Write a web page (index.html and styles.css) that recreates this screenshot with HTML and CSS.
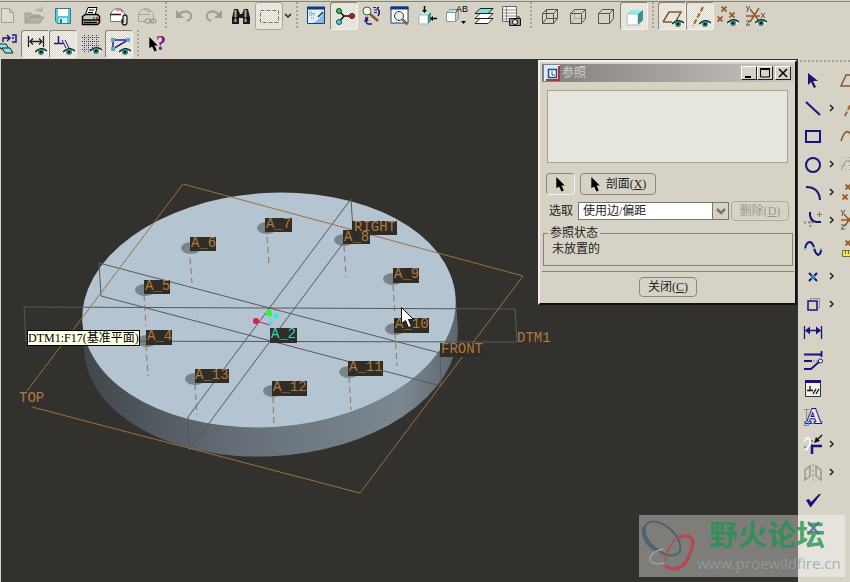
FILE: index.html
```html
<!DOCTYPE html>
<html lang="zh-CN">
<head>
    <meta charset="UTF-8">
    <meta name="viewport" content="width=device-width, initial-scale=1.0">
    <title>参照</title>
    <link rel="stylesheet" href="styles.css">
</head>
<body>

    <!-- Shared symbols -->
    <svg class="symbols" aria-hidden="true">
        <symbol id="eye" viewBox="0 0 12 8">
            <path d="M0 4Q6-3 12 4Q6 10 0 4z" fill="#eef4f0"/>
            <path d="M0 4Q6-2 12 3" fill="none" stroke="#10282a" stroke-width="1.500"/>
            <circle cx="6" cy="4" r="3" fill="#3c827c"/>
            <circle cx="6" cy="4" r="1.300" fill="#062022"/>
        </symbol>
        <symbol id="chevron" viewBox="0 0 6 8">
            <path d="M1 1l3 3-3 3" fill="none" stroke="#222" stroke-width="1.500"/>
        </symbol>
        <symbol id="pointer" viewBox="0 0 12 16">
            <path d="M1 0v12l3-2 2.500 5.500 2.500-1L6.500 9H10z" fill="#000"/>
        </symbol>
        <symbol id="cross" viewBox="0 0 6 6">
            <path d="M0.500 0.500l5 5M5.500 0.500l-5 5" stroke="#9a5722" stroke-width="1.800"/>
        </symbol>
    </svg>

    <!-- Top toolbars -->
    <header class="toolbars">
        <div class="toolbar">
            <button class="tool" aria-label="新建"><svg viewBox="0 0 24 24"><path d="M6.500 4.500h8l4 4v10h-12zM14.500 4.500v4h4" fill="#dedbd0" stroke="#a4a193"/></svg></button>
            <button class="tool" aria-label="打开"><svg viewBox="0 0 24 24"><path d="M2 19V9h6l2 2h7v2H8zM2 19L7 13h14l-4 6z" fill="#b4b1a4" stroke="#a09d90"/><path d="M12 7q4-4 7 0M19 3v4h-4" fill="none" stroke="#a09d90"/></svg></button>
            <button class="tool" aria-label="保存"><svg viewBox="0 0 24 24"><path d="M4.500 4.500h15v15h-13l-2-2z" fill="#58cbd2" stroke="#2b7f8b"/><path d="M7 5h10v7H7z" fill="#fff"/><path d="M8 14h8v5H8z" fill="#d8eef0"/><path d="M9 15h2v4H9z" fill="#2b7f8b"/></svg></button>
            <button class="tool" aria-label="打印"><svg viewBox="0 0 24 24"><path d="M9 3.500h9l-2 8H6z" fill="#fff" stroke="#000"/><path d="M10 6h5M9 8.500h5" stroke="#000"/><path d="M3.500 12.500l3-2h12l2 2v6l-2 2h-15z" fill="#c9c7bf" stroke="#000" stroke-width="1.500"/><path d="M4 16h16M5 18.500h13" stroke="#000" stroke-width="1.500"/><path d="M14 14h2" stroke="#2a2" stroke-width="2"/><path d="M17 14h2" stroke="#d22" stroke-width="2"/></svg></button>
            <button class="tool" aria-label="发送附件"><svg viewBox="0 0 24 24"><path d="M3.500 17.500v-7q2-6 7-6 6 0 8 7v6z" fill="#fff" stroke="#777"/><path d="M3 10.500h11" stroke="#222" stroke-width="1.500"/><path d="M9 6h6v3" fill="none" stroke="#c33"/><path d="M16 19v-6q0-2 2-2t2 2v5q0 3-2.500 3T15 18v-3" fill="#ddd" stroke="#222" stroke-width="1.300"/></svg></button>
            <button class="tool" aria-label="发送链接"><svg viewBox="0 0 24 24"><path d="M3.500 17.500v-7q2-6 7-6 6 0 8 7v6zM3 10.500h12M9 6h5v3" fill="none" stroke="#a5a294"/><rect x="10" y="15" width="6" height="4" rx="2" fill="#d6d3c6" stroke="#8f8c80"/><rect x="15" y="15" width="6" height="4" rx="2" fill="none" stroke="#8f8c80"/></svg></button>
            <span class="separator"></span>
            <button class="tool" aria-label="撤销"><svg viewBox="0 0 24 24"><path d="M5 11q7-6 12-2 4 5-3 8" fill="none" stroke="#a09d90" stroke-width="2"/><path d="M3 6v8h8z" fill="#a09d90"/></svg></button>
            <button class="tool" aria-label="重做"><svg viewBox="0 0 24 24"><path d="M19 11q-7-6-12-2-4 5 3 8" fill="none" stroke="#a09d90" stroke-width="2"/><path d="M21 6v8h-8z" fill="#a09d90"/></svg></button>
            <button class="tool" aria-label="查找"><svg viewBox="0 0 24 24"><path d="M5 5h4l2 5h2l2-5h4l2 9v6h-7v-6h-4v6H3v-6z" fill="#1a1a1a"/><path d="M6.500 6v12M16.500 6v12" stroke="#aaa" stroke-width="2"/><path d="M3 14h7M14 14h7" stroke="#000"/></svg></button>
            <button class="tool pressed round" aria-label="选取框"><svg viewBox="0 0 24 24"><rect x="3.500" y="6.500" width="18" height="12" fill="none" stroke="#777468" stroke-dasharray="4 2"/></svg></button>
            <button class="drop" aria-label="选取选项"><svg viewBox="0 0 8 6"><path d="M1 1l3 3 3-3" fill="none" stroke="#222" stroke-width="1.500"/></svg></button>
            <span class="separator"></span>
            <button class="tool" aria-label="重画"><svg viewBox="0 0 24 24"><path d="M3.500 3.500h17v16h-17z" fill="#e2eef8" stroke="#123f80"/><path d="M3 4h18" stroke="#0d3a86" stroke-width="3"/><path d="M9 19q8-4 11-12v12z" fill="#8ab7e8"/><path d="M14 13l5-5" stroke="#16325c" stroke-width="1.500"/><path d="M5 8h3M5 11h6M6 9.500h5M7 14h3" stroke="#397" stroke-dasharray="1 1"/></svg></button>
            <button class="tool pressed" aria-label="旋转中心"><svg viewBox="0 0 24 24"><path d="M7 7l5 5-5 6M12 12h8" fill="none" stroke="#111" stroke-width="1.500"/><circle cx="7" cy="7" r="2.500" fill="#38c450" stroke="#0b4b18"/><circle cx="7" cy="18" r="2.500" fill="#45d7dd" stroke="#0c4c57"/><circle cx="20" cy="12" r="2.500" fill="#b3262b" stroke="#510b0e"/></svg></button>
            <button class="tool" aria-label="定向模式"><svg viewBox="0 0 24 24"><circle cx="7" cy="7" r="4" fill="#f2f2ee" stroke="#555"/><path d="M10 10l8 7" stroke="#7d5536" stroke-width="2.500"/><path d="M13 3.500h6M14 6h5M14 8.500h3" stroke="#1a1a7c" stroke-dasharray="3 1"/><path d="M17 4q4 4 1 8M8 13q-4 5 0 7l4 0M8 17l-2-3-1 4" fill="none" stroke="#1a1a7c" stroke-width="1.500"/></svg></button>
            <button class="tool" aria-label="重新调整"><svg viewBox="0 0 24 24"><path d="M3 3h17v16H3z" fill="#fff" stroke="#123f80"/><path d="M2.500 4h18" stroke="#0d3a86" stroke-width="3"/><circle cx="11" cy="12" r="4.500" fill="#e8eef0" stroke="#333"/><path d="M14.500 15.500l5 5" stroke="#8d6239" stroke-width="2.500"/></svg></button>
            <button class="tool" aria-label="定向"><svg viewBox="0 0 24 24"><path d="M3 11l3-3h9l-3 3z" fill="#a9ecec"/><path d="M3 11h9v9H3z" fill="#fff" stroke="#9bb"/><path d="M12 11l3-3v9l-3 3z" fill="#3b9795"/><path d="M8.500 2v5M21 14.500h-5" stroke="#000" stroke-width="1.500"/><path d="M6 6h5l-2.500 3zM17 12v5l-3-2.500z"/></svg></button>
            <button class="tool" aria-label="已命名视图"><svg viewBox="0 0 24 24"><path d="M2.500 8.500l3-3h9l-3 3z" fill="#9fe9e9" stroke="#899"/><path d="M2.500 8.500h9v9h-9z" fill="#fff" stroke="#899"/><path d="M11.500 8.500l3-3v9l-3 3z" fill="#b7c7c4" stroke="#899"/><text class="icon-text" x="12" y="8">AB</text><path d="M17 17h5l-2.500 3z"/></svg></button>
            <button class="tool" aria-label="图层"><svg viewBox="0 0 24 24"><path d="M3 19.500l5-5h13l-5 5zM3 14.500l5-5h13l-5 5z" fill="#fff" stroke="#222"/><path d="M3 9.500l5-5h13l-5 5z" fill="#80dfdd" stroke="#222"/></svg></button>
            <button class="tool" aria-label="视图管理器"><svg viewBox="0 0 24 24"><path d="M2.500 2.500h14v15h-14z" fill="#fff" stroke="#666"/><path d="M3 6h13M3 9h13M3 12h13M3 15h13M6.500 3v14" stroke="#888"/><path d="M9.500 14.500h11v7h-11zM17 13h3" fill="#98958a" stroke="#111"/><circle cx="15" cy="18" r="2.500" fill="#eee" stroke="#111"/></svg></button>
            <span class="separator"></span>
            <button class="tool" aria-label="线框"><svg viewBox="0 0 24 24"><path d="M4.500 9.500l4-4h11v9l-4 5h-11zM4.500 9.500h11v10M15.500 9.500l4-4M8.500 5.500v9h11M8.500 14.500l-4 5" fill="none" stroke="#55534c"/></svg></button>
            <button class="tool" aria-label="隐藏线"><svg viewBox="0 0 24 24"><path d="M8.500 5.500v9h11M8.500 14.500l-4 5" fill="none" stroke="#aaa89c"/><path d="M4.500 9.500l4-4h11v9l-4 5h-11zM4.500 9.500h11v10M15.500 9.500l4-4" fill="none" stroke="#55534c"/></svg></button>
            <button class="tool" aria-label="消隐"><svg viewBox="0 0 24 24"><path d="M4.500 9.500l4-4h11v9l-4 5h-11zM4.500 9.500h11v10M15.500 9.500l4-4" fill="none" stroke="#55534c"/></svg></button>
            <button class="tool pressed" aria-label="着色"><svg viewBox="0 0 24 24"><path d="M5 10l4-4h12l-5 4z" fill="#8eeeee"/><path d="M5 10h11v11H5z" fill="#fff" stroke="#abc"/><path d="M16 10l5-4v10l-5 5z" fill="#3b9090"/></svg></button>
            <span class="separator"></span>
            <button class="tool pressed" aria-label="基准平面开关"><svg viewBox="0 0 24 24"><path d="M3 18l6-10h12l-5 9M3 18h9" fill="none" stroke="#8c5426" stroke-width="1.500"/><use href="#eye" x="12" y="16" width="12" height="8"/></svg></button>
            <button class="tool pressed" aria-label="基准轴开关"><svg viewBox="0 0 24 24"><path d="M15 3L5 22" stroke="#a5622d" stroke-width="2" stroke-dasharray="5 2"/><use href="#eye" x="11" y="16" width="12" height="8"/></svg></button>
            <button class="tool" aria-label="基准点开关"><svg viewBox="0 0 24 24"><use href="#cross" x="5" y="2" width="6" height="6"/><use href="#cross" x="13" y="8" width="6" height="6"/><use href="#cross" x="1" y="12" width="6" height="6"/><use href="#eye" x="11" y="15" width="12" height="8"/></svg></button>
            <button class="tool" aria-label="坐标系开关"><svg viewBox="0 0 24 24"><path d="M2 12h14M6 5l10 13M15 4L6 18" stroke="#9a5722" stroke-width="1.500"/><path d="M2 2l2 3 2-3M4 5l-1 3M2 17h4l-4 4h4M17 9l4 5M21 9l-4 5" fill="none" stroke="#55534c"/><use href="#eye" x="11" y="15" width="12" height="8"/></svg></button>
        </div>

        <div class="toolbar">
            <button class="tool" aria-label="再生"><svg viewBox="0 0 24 24"><path d="M3 12h8l3 5H6z" fill="#8fe4e0" stroke="#123"/><path d="M7 16h8l3 5h-8z" fill="#8fe4e0" stroke="#123"/><path d="M8 10V6h6M12 3l3 3-3 3M17 3h4v7h-4M17 6h2" fill="none" stroke="#1a1a7c" stroke-width="1.500"/></svg></button>
            <button class="tool pressed" aria-label="显示尺寸"><svg viewBox="0 0 24 24"><path d="M5.500 4v11M20.500 4v11M7 9.500h12M10 6.500l-3 3 3 3M16 6.500l3 3-3 3" fill="none" stroke="#222" stroke-width="1.300"/><use href="#eye" x="12" y="16" width="12" height="8"/></svg></button>
            <button class="tool pressed" aria-label="显示约束"><svg viewBox="0 0 24 24"><path d="M3 11.500h9M7.500 4v7" stroke="#15157a" stroke-width="1.500"/><path d="M11 8l4 8M14 8l4 8" stroke="#15157a"/><use href="#eye" x="12" y="16" width="12" height="8"/></svg></button>
            <button class="tool" aria-label="显示栅格"><svg viewBox="0 0 24 24"><path d="M5.500 3v18M9.500 3v18M13.500 3v18M17.500 3v18M3 5.500h17M3 9.500h17M3 13.500h17M3 17.500h17" stroke="#34347c" stroke-dasharray="1 1"/><use href="#eye" x="11" y="15" width="12" height="8"/></svg></button>
            <button class="tool pressed" aria-label="显示顶点"><svg viewBox="0 0 24 24"><path d="M6 8h15L6 17z" fill="none" stroke="#24248a" stroke-width="1.500"/><path d="M4 6h4v4H4zM19 6h4v4h-4zM4 15h4v4H4z" fill="#58a7cf"/><use href="#eye" x="12" y="16" width="12" height="8"/></svg></button>
            <span class="separator"></span>
            <button class="tool" aria-label="帮助"><svg viewBox="0 0 24 24"><use href="#pointer" x="3" y="5" width="12" height="15"/><text class="help-mark" x="11" y="18">?</text></svg></button>
        </div>
    </header>

    <main class="workspace">
        <!-- 3D view -->
        <section class="viewport">
            <svg class="scene" role="img" aria-label="模型">
                <defs>
                    <linearGradient id="side" gradientUnits="userSpaceOnUse" x1="82" y1="0" x2="458" y2="0">
                        <stop offset="0" stop-color="#41464c"/>
                        <stop offset="0.450" stop-color="#68717a"/>
                        <stop offset="0.850" stop-color="#7b8791"/>
                        <stop offset="1" stop-color="#5c666e"/>
                    </linearGradient>
                </defs>
                <g transform="translate(-1 -59)">
                    <path d="M82 318L84 347L458 331L456 302z" fill="url(#side)"/>
                    <path d="M84 347A187 117 -4 0 0 458 331z" fill="url(#side)"/>
                    <ellipse cx="269" cy="310" rx="187" ry="117" transform="rotate(-4 269 310)" fill="#b4c4d0"/>

                    <!-- holes -->
                    <g fill="#78838c">
                        <ellipse cx="267" cy="228" rx="10" ry="6"/>
                        <ellipse cx="191" cy="248" rx="10" ry="6"/>
                        <ellipse cx="145" cy="290" rx="10" ry="6"/>
                        <ellipse cx="147" cy="341" rx="10" ry="6"/>
                        <ellipse cx="195" cy="379" rx="10" ry="6"/>
                        <ellipse cx="273" cy="391" rx="10" ry="6"/>
                        <ellipse cx="349" cy="372" rx="10" ry="6"/>
                        <ellipse cx="395" cy="329" rx="10" ry="6"/>
                        <ellipse cx="393" cy="279" rx="10" ry="6"/>
                        <ellipse cx="344" cy="240" rx="10" ry="6"/>
                    </g>

                    <!-- hole axes -->
                    <path d="M267 237l2 27M190 258l2 25M144 295l2 31M146 345l2 31M195 384l2 31M273 397l1 30M349 377l2 33M395 333l2 33M393 285l2 29M344 246l2 31" fill="none" stroke="#8d7460" stroke-dasharray="6 4"/>

                    <!-- datum planes -->
                    <g fill="none" stroke="#555a5e">
                        <path d="M26 341L24 307L515 309L517 342L26 341"/>
                        <path d="M99 263L440 353L441 386L101 296z"/>
                        <path d="M188 417L351 199L353 230L189 450z"/>
                    </g>
                    <path d="M27 391L183 184L523 276L360 493L32 407" fill="none" stroke="#9c7142"/>

                    <!-- spin center -->
                    <path d="M256 321l14 4" stroke="#d0205a"/>
                    <path d="M276 316l-6 9v-12" fill="none" stroke="#28e8d8"/>
                    <circle cx="256" cy="321" r="3" fill="#d81c50"/>
                    <circle cx="276" cy="316" r="2.500" fill="#28e8e8"/>
                    <rect x="266" y="310" width="6" height="6" fill="#3ef03e"/>

                    <g class="label-box">
                        <rect x="352" y="221" width="45" height="14"/>
                        <rect x="265" y="218" width="27" height="14"/>
                        <rect x="190" y="237" width="26" height="14"/>
                        <rect x="144" y="280" width="26" height="14"/>
                        <rect x="146" y="330" width="26" height="15"/>
                        <rect x="195" y="369" width="34" height="14"/>
                        <rect x="272" y="381" width="35" height="15"/>
                        <rect x="348" y="361" width="35" height="15"/>
                        <rect x="394" y="318" width="35" height="15"/>
                        <rect x="393" y="268" width="26" height="15"/>
                        <rect x="343" y="230" width="27" height="14"/>
                        <rect x="440" y="343" width="42" height="14"/>
                        <rect x="270" y="328" width="27" height="15"/>
                    </g>
                    <g class="label">
                        <text x="354" y="231">RIGHT</text>
                        <text x="266" y="228">A_7</text>
                        <text x="191" y="247">A_6</text>
                        <text x="145" y="290">A_5</text>
                        <text x="147" y="340">A_4</text>
                        <text x="195" y="379">A_13</text>
                        <text x="273" y="391">A_12</text>
                        <text x="349" y="371">A_11</text>
                        <text x="395" y="328">A_10</text>
                        <text x="394" y="278">A_9</text>
                        <text x="344" y="241">A_8</text>
                        <text x="441" y="353">FRONT</text>
                        <text x="517" y="342">DTM1</text>
                        <text x="19" y="402">TOP</text>
                        <text class="active" x="271" y="338">A_2</text>
                    </g>

                    <path d="M401.500 307.500v16l4-3 3 7 3-1-3-7h5z" fill="#fff" stroke="#111"/>
                </g>
            </svg>

            <div class="tooltip" role="tooltip">DTM1:F17(基准平面)</div>

            <!-- References dialog -->
            <form class="dialog" onsubmit="return false">
                <div class="titlebar">
                    <svg class="title-icon" viewBox="0 0 16 16"><rect width="16" height="16" fill="#d9eef8"/><path d="M15 1v14H2" fill="none" stroke="#b83232" stroke-width="2"/><path d="M4.500 4.500h8v8h-8z" fill="#fff" stroke="#1c4f87" stroke-width="1.500"/><path d="M8 6v4h3" fill="none" stroke="#1c4f87"/></svg>
                    <h1>参照</h1>
                    <div class="window-buttons">
                        <button type="button" aria-label="最小化"><svg viewBox="0 0 12 10"><path d="M2 9h6" stroke="#000" stroke-width="2"/></svg></button>
                        <button type="button" aria-label="最大化"><svg viewBox="0 0 12 10"><path d="M1.500 1h9v8h-9z" fill="none" stroke="#000"/><path d="M1 1h10" stroke="#000" stroke-width="2"/></svg></button>
                        <button class="close" type="button" aria-label="关闭窗口"><svg viewBox="0 0 12 10"><path d="M2 1l8 8M10 1L2 9" stroke="#000" stroke-width="1.500"/></svg></button>
                    </div>
                </div>

                <div class="reference-list"></div>

                <div class="pick-row">
                    <button class="btn pick" type="button" aria-label="选取"><svg viewBox="0 0 12 16"><use href="#pointer" width="12" height="16"/></svg></button>
                    <button class="btn section-btn" type="button"><svg viewBox="0 0 12 16"><use href="#pointer" width="12" height="16"/></svg><span>剖面(<u>X</u>)</span></button>
                </div>

                <div class="select-row">
                    <label for="pickMode">选取</label>
                    <div class="combo">
                        <select id="pickMode">
                            <option>使用边/偏距</option>
                        </select>
                        <span class="combo-arrow"><svg viewBox="0 0 10 8"><path d="M1 2l4 4 4-4" fill="none" stroke="#77756a" stroke-width="2.500"/></svg></span>
                    </div>
                    <button class="btn delete-btn" type="button" disabled>删除(<u>D</u>)</button>
                </div>

                <fieldset class="status">
                    <legend>参照状态</legend>
                    <p>未放置的</p>
                </fieldset>

                <div class="dialog-footer">
                    <button class="btn close-btn" type="button">关闭(<u>C</u>)</button>
                </div>
            </form>
        </section>

        <!-- Sketcher tools: tool, flyout arrow, datum tool -->
        <aside class="side-tools">
            <div class="grip"></div>
            <div class="side-grid">
                <button class="tool" aria-label="选取项目"><svg viewBox="0 0 24 24"><path d="M7 5v12l3-3 3 6 2-1-3-6h5z" fill="#14147c"/></svg></button>
                <span></span>
                <button class="tool" aria-label="基准平面"><svg viewBox="0 0 24 24"><path d="M2 18L7 7h12l-5 11z" fill="none" stroke="#8c5426" stroke-width="1.500"/></svg></button>

                <button class="tool" aria-label="直线"><svg viewBox="0 0 24 24"><path d="M5 6l14 13" stroke="#14147c" stroke-width="2"/></svg></button>
                <button class="flyout" aria-label="直线选项"><svg><use href="#chevron"/></svg></button>
                <button class="tool" aria-label="基准轴"><svg viewBox="0 0 24 24"><path d="M14 3L5 22" stroke="#a5622d" stroke-width="2" stroke-dasharray="5 2"/></svg></button>

                <button class="tool" aria-label="矩形"><svg viewBox="0 0 24 24"><path d="M5 7h14v11H5z" fill="none" stroke="#14147c" stroke-width="2"/></svg></button>
                <span></span>
                <button class="tool" aria-label="曲线"><svg viewBox="0 0 24 24"><path d="M2 17q5-15 10-6t10-2" fill="none" stroke="#8c5426" stroke-width="1.500"/></svg></button>

                <button class="tool" aria-label="圆"><svg viewBox="0 0 24 24"><circle cx="12" cy="13" r="7" fill="none" stroke="#14147c" stroke-width="2"/></svg></button>
                <button class="flyout" aria-label="圆选项"><svg><use href="#chevron"/></svg></button>
                <button class="tool" aria-label="草绘曲线"><svg viewBox="0 0 24 24"><path d="M2 5.500h20M2 9.500h20M2 13.500h20M2 17.500h20" stroke="#a4a193" stroke-dasharray="1 3"/><path d="M3 17q4-13 9-6t10-2" fill="none" stroke="#a4a193" stroke-width="1.500"/></svg></button>

                <button class="tool" aria-label="圆弧"><svg viewBox="0 0 24 24"><path d="M5 7q13 0 14 13" fill="none" stroke="#14147c" stroke-width="2"/></svg></button>
                <button class="flyout" aria-label="圆弧选项"><svg><use href="#chevron"/></svg></button>
                <button class="tool" aria-label="基准点"><svg viewBox="0 0 24 24"><use href="#cross" x="6" y="4" width="6" height="6"/><use href="#cross" x="3" y="14" width="6" height="6"/><use href="#cross" x="14" y="9" width="6" height="6"/></svg></button>

                <button class="tool" aria-label="圆角"><svg viewBox="0 0 24 24"><path d="M3 14.500h9M9.500 13v8" stroke="#888" stroke-width="2" stroke-dasharray="2 2"/><path d="M16 6.500h5M18.500 4v5" stroke="#777"/><path d="M9 4v3q1 7 7 7h4" fill="none" stroke="#14147c" stroke-width="2"/></svg></button>
                <button class="flyout" aria-label="圆角选项"><svg><use href="#chevron"/></svg></button>
                <button class="tool" aria-label="坐标系"><svg viewBox="0 0 24 24"><path d="M2 12h16M5 6l10 12M15 4L6 18" stroke="#9a5722" stroke-width="1.500"/><path d="M2 2l2 3 2-3M4 5l-1 3M2 17h4l-4 4h4" fill="none" stroke="#55534c"/></svg></button>

                <button class="tool" aria-label="样条"><svg viewBox="0 0 24 24"><path d="M4 13q1-7 5-7 3 1 4 6t4 7q3-1 3-6" fill="none" stroke="#14147c" stroke-width="2"/><path d="M3 12h2v2H3zM12 11h2v2h-2zM19 12h2v2h-2z" fill="#51c4dc"/></svg></button>
                <span></span>
                <button class="tool" aria-label="偏移点"><svg viewBox="0 0 24 24"><use href="#cross" x="6" y="4" width="6" height="6"/><path d="M3.500 14.500h16v6h-16z" fill="#f0e45c" stroke="#77703a"/><path d="M6.500 15v3M9.500 15v3M12.500 15v3" stroke="#77703a"/></svg></button>

                <button class="tool" aria-label="点"><svg viewBox="0 0 24 24"><path d="M8 9l8 8M16 9l-8 8" stroke="#14147c" stroke-width="2"/><path d="M10 11h4v4h-4z" fill="#2a86bb"/></svg></button>
                <button class="flyout" aria-label="点选项"><svg><use href="#chevron"/></svg></button>
                <span></span>

                <button class="tool" aria-label="使用边"><svg viewBox="0 0 24 24"><path d="M9.500 6.500h9v9h-9z" fill="none" stroke="#8f8c80"/><path d="M7 9h9v9H7z" fill="#d6d3c6" stroke="#14147c" stroke-width="1.500"/></svg></button>
                <button class="flyout" aria-label="使用边选项"><svg><use href="#chevron"/></svg></button>
                <span></span>

                <button class="tool" aria-label="尺寸"><svg viewBox="0 0 24 24"><path d="M3.500 6v13M20.500 6v13M5 10.500h14" stroke="#14147c" stroke-width="1.300"/><path d="M4 10.500l5-4v8zM20 10.500l-5-4v8z" fill="#14147c"/></svg></button>
                <span></span>
                <span></span>

                <button class="tool" aria-label="修改"><svg viewBox="0 0 24 24"><path d="M3 6.500h18M20.500 3v6M3 13h8M3 21h7l9-8" fill="none" stroke="#14147c" stroke-width="1.800"/><path d="M12 13h6" stroke="#58a" stroke-dasharray="2 1"/><circle cx="19.500" cy="13" r="2" fill="#fff" stroke="#14147c"/></svg></button>
                <span></span>
                <span></span>

                <button class="tool" aria-label="约束"><svg viewBox="0 0 24 24"><path d="M4.500 4.500h15v16h-15z" fill="#f2f1ea" stroke="#333"/><path d="M4 5.500h16" stroke="#14147c" stroke-width="3"/><path d="M6 14.500h6M9 10v4M12 18l3-5M15 18l3-5" stroke="#111" stroke-width="1.300"/></svg></button>
                <span></span>
                <span></span>

                <button class="tool" aria-label="文本"><svg viewBox="0 0 24 24"><path d="M5.500 5v13M3 5.500h5M5 19.500h15" stroke="#8f8c80"/><text class="text-tool" x="5" y="19">A</text><path d="M3.500 17.500h4v4h-4z" fill="none" stroke="#4694c4"/></svg></button>
                <span></span>
                <span></span>

                <button class="tool" aria-label="修剪"><svg viewBox="0 0 24 24"><path d="M3 15h8M11 8v6" stroke="#888" stroke-width="2" stroke-dasharray="2 2"/><path d="M3 9q5-6 6 0t-5 9" fill="none" stroke="#fff" stroke-width="1.500"/><path d="M11 22v-8h10" fill="none" stroke="#14147c" stroke-width="2.500"/><path d="M21 3l-5 5" stroke="#111" stroke-width="1.500"/><path d="M13 11l2-6 4 4z" fill="#111"/></svg></button>
                <button class="flyout" aria-label="修剪选项"><svg><use href="#chevron"/></svg></button>
                <span></span>

                <button class="tool" aria-label="镜像"><svg viewBox="0 0 24 24"><path d="M4 10l5-4v10l-5 4zM20 10l-5-4v10l5 4z" fill="none" stroke="#98958a" stroke-width="1.500"/><path d="M12 4v17" stroke="#98958a" stroke-dasharray="3 2"/></svg></button>
                <button class="flyout" aria-label="镜像选项"><svg><use href="#chevron"/></svg></button>
                <span></span>

                <button class="tool" aria-label="完成"><svg viewBox="0 0 24 24"><path d="M5 12l3-1 2 3 8-8h2L10 19H9z" fill="#14147c"/></svg></button>
                <span></span>
                <span></span>

                <button class="tool" aria-label="退出"><svg viewBox="0 0 24 24"><path d="M7 6l11 12M18 6L7 18" stroke="#14147c" stroke-width="2"/></svg></button>
                <span></span>
                <span></span>
            </div>
        </aside>
    </main>

    <!-- Forum watermark -->
    <div class="watermark">
        <svg class="watermark-logo" viewBox="0 0 60 58">
            <ellipse cx="23" cy="21" rx="23" ry="13" transform="rotate(42 23 21)" fill="none" stroke="#4d6272" stroke-width="2"/>
            <path d="M3 9Q1 24 17 34" fill="none" stroke="#4d6272" stroke-width="4"/>
            <path d="M39 20Q58 14 55 29Q48 57 31 53Q27 52 27 49" fill="none" stroke="#b84850" stroke-width="3.500"/>
            <path d="M26 47Q25 36 36 22" fill="none" stroke="#b84850" stroke-width="1.500"/>
            <path d="M25 32Q8 35 10 45Q15 50 25 47" fill="none" stroke="#9a9c99" stroke-width="2"/>
        </svg>
        <div class="watermark-text">
            <strong>野火论坛</strong>
            <span>www.proewildfire.cn</span>
        </div>
    </div>

</body>
</html>
```
FILE: styles.css
```css
* {
    box-sizing: border-box;
}

body {
    margin: 0;
    height: 100vh;
    display: flex;
    flex-direction: column;
    position: relative;
    overflow: hidden;
    background-color: #d6d3c6;
    color: #222;
    font-family: "Liberation Serif", "Noto Sans CJK SC", serif;
    font-size: 12px;
    line-height: 16px;
}

button {
    padding: 0;
    border: 0;
    background: none;
    color: inherit;
    font: inherit;
}

svg {
    display: block;
}

.symbols {
    position: absolute;
    width: 0;
    height: 0;
}

/* Top toolbars */
.toolbars {
    margin-top: 1px;
    border-top: 1px solid #85837a;
    padding-bottom: 1px;
    overflow: hidden;
}

.toolbar {
    display: flex;
    height: 28px;
    margin-left: -7px;
}

.tool {
    flex: none;
    display: flex;
    align-items: center;
    justify-content: center;
    width: 28px;
    height: 28px;
    border: 1px solid transparent;
}

.tool svg {
    flex: none;
    width: 24px;
    height: 24px;
}

.pressed {
    background: repeating-conic-gradient(#f6f3ee 0 25%, #dad7cb 0 50%) 0 0 / 2px 2px;
    border-color: #85837a #f4f2ea #f4f2ea #85837a;
    border-radius: 3px;
}

.round {
    border-color: #aaa798;
}

.drop {
    display: flex;
    align-items: center;
    justify-content: center;
    width: 9px;
}

.drop svg {
    width: 8px;
    height: 6px;
}

.separator {
    width: 10px;
    height: 28px;
    background: repeating-linear-gradient(#a3a195 0 2px, transparent 2px 4px) 4px 0 / 2px 100% no-repeat;
}

.icon-text {
    font-family: "Liberation Sans", sans-serif;
    font-size: 9px;
}

.help-mark {
    font-size: 20px;
    font-weight: bold;
    fill: #7c1580;
}

.text-tool {
    font-size: 21px;
    font-weight: bold;
    fill: #e8e8ee;
    stroke: #14147c;
    stroke-width: 2px;
    paint-order: stroke;
}

/* Workspace */
.workspace {
    flex: 1;
    display: flex;
    min-height: 0;
    padding-left: 1px;
}

.viewport {
    flex: 1;
    position: relative;
    overflow: hidden;
    background-color: #33312d;
}

.scene {
    width: 100%;
    height: 100%;
}

.label-box {
    fill: #302c26;
}

.label {
    font-family: "Liberation Mono", monospace;
    font-size: 14px;
    fill: #b07a40;
}

.label .active {
    fill: #2fd8bd;
}

.tooltip {
    position: absolute;
    left: 26px;
    top: 271px;
    border: 1px solid #000;
    background-color: #ffffe6;
    color: #000;
    line-height: 14px;
    white-space: nowrap;
}

/* References dialog */
.dialog {
    position: absolute;
    top: 1px;
    right: 1px;
    width: 259px;
    padding: 2px 1px 6px 2px;
    border: 2px solid #f1efe8;
    border-right-color: #111;
    border-bottom-color: #111;
    background-color: #d6d3c6;
}

.titlebar {
    display: flex;
    align-items: center;
    height: 18px;
    padding: 0 3px 0 2px;
    background: linear-gradient(to right, #7f7f7d, #c9c7c0);
}

.title-icon {
    width: 16px;
    height: 16px;
}

.titlebar h1 {
    flex: 1;
    margin: 0 0 0 2px;
    color: #d2d0ca;
    font-size: 12px;
    font-weight: normal;
}

.window-buttons {
    display: flex;
}

.window-buttons button {
    display: flex;
    align-items: center;
    justify-content: center;
    width: 16px;
    height: 14px;
    border: 1px solid #fff;
    border-right-color: #222;
    border-bottom-color: #222;
    background-color: #d6d3c6;
}

.window-buttons .close {
    margin-left: 2px;
}

.window-buttons svg {
    width: 12px;
    height: 10px;
}

.reference-list {
    height: 73px;
    margin: 8px 6px 0 5px;
    border: 1px solid #a6a38f;
    background-color: #e6e6de;
}

.btn {
    border: 1px solid #8b897e;
    border-radius: 4px;
    background-color: #d6d3c6;
    white-space: nowrap;
}

.pick-row {
    display: flex;
    gap: 5px;
    height: 22px;
    margin: 10px 0 0 4px;
}

.pick-row .btn {
    display: flex;
    align-items: center;
    justify-content: center;
    gap: 4px;
}

.pick-row svg {
    width: 12px;
    height: 15px;
}

.pick {
    width: 29px;
    border-right-color: #f4f2ea;
    border-bottom-color: #f4f2ea;
}

.section-btn {
    width: 76px;
}

.select-row {
    display: flex;
    align-items: center;
    height: 20px;
    margin: 6px 5px 0 7px;
}

.combo {
    flex: 1;
    position: relative;
    height: 18px;
    margin: 0 2px 0 5px;
}

.combo select {
    appearance: none;
    width: 100%;
    height: 18px;
    padding: 0 20px 0 4px;
    border: 1px solid #77756a;
    border-radius: 0;
    background-color: #fff;
    color: #222;
    font: inherit;
}

.combo-arrow {
    position: absolute;
    top: 1px;
    right: 1px;
    bottom: 1px;
    width: 16px;
    display: flex;
    align-items: center;
    justify-content: center;
    border-left: 1px solid #77756a;
    background-color: #d6d3c6;
    pointer-events: none;
}

.combo-arrow svg {
    width: 10px;
    height: 8px;
}

.delete-btn {
    width: 58px;
    height: 20px;
    border-color: #aeab9d;
    color: #9a978a;
}

.status {
    min-width: 0;
    margin: 4px 1px 0 1px;
    padding: 0 8px 8px;
    border: 1px solid #85837a;
}

.status legend {
    margin-left: -4px;
    padding: 0 2px;
    line-height: 16px;
}

.status p {
    margin: 0;
}

.dialog-footer {
    display: flex;
    justify-content: center;
    margin-top: 5px;
    padding-top: 5px;
    border-top: 1px solid #85837a;
}

.close-btn {
    width: 58px;
    height: 20px;
}

/* Sketcher tools */
.side-tools {
    width: 52px;
    overflow: hidden;
}

.grip {
    height: 7px;
    background: repeating-linear-gradient(to right, #a3a195 0 2px, transparent 2px 4px) 2px 1px / 100% 2px no-repeat;
}

.side-grid {
    display: grid;
    grid-template-columns: 28px 10px 28px;
    grid-auto-rows: 28px;
    margin-left: 1px;
}

.flyout {
    display: flex;
    align-items: center;
    justify-content: center;
}

.flyout svg {
    width: 6px;
    height: 8px;
}

/* Forum watermark */
.watermark {
    position: absolute;
    right: 5px;
    bottom: 5px;
    display: flex;
    width: 206px;
    height: 62px;
    padding: 2px;
    background-color: rgba(255, 255, 255, 0.37);
    pointer-events: none;
}

.watermark-logo {
    flex: none;
    width: 56px;
    height: 58px;
}

.watermark-text {
    display: flex;
    flex-direction: column;
    font-family: "Open Sans", "Noto Sans CJK SC", sans-serif;
    white-space: nowrap;
}

.watermark-text strong {
    margin-left: 12px;
    color: rgba(32, 148, 80, 0.8);
    font-size: 29px;
    line-height: 36px;
}

.watermark-text span {
    color: rgba(140, 165, 168, 0.8);
    font-size: 15px;
    line-height: 20px;
}
```
